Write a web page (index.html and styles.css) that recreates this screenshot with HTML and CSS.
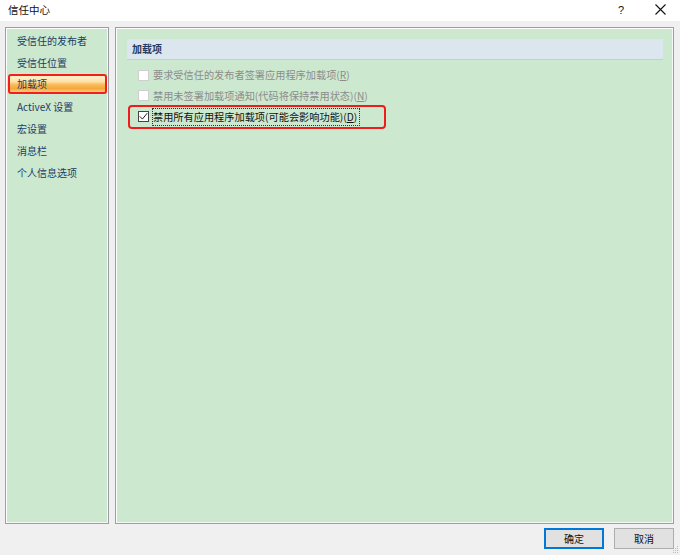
FILE: index.html
```html
<!DOCTYPE html>
<html lang="zh-CN">
<head>
<meta charset="utf-8">
<title>信任中心</title>
<link rel="stylesheet" href="styles.css">
</head>
<body>
<div class="dialog">
  <div class="titlebar">
    <span class="title">信任中心</span>
    <span class="tb-btns">
      <span class="help">?</span>
      <svg class="close" width="11" height="11" viewBox="0 0 11 11"><path d="M0.5 0.5 L10.5 10.5 M10.5 0.5 L0.5 10.5" stroke="#111" stroke-width="1.1" fill="none"/></svg>
    </span>
  </div>
  <div class="main">
    <ul class="nav">
      <li>受信任的发布者</li>
      <li>受信任位置</li>
      <li class="sel">加载项</li>
      <li>ActiveX 设置</li>
      <li>宏设置</li>
      <li>消息栏</li>
      <li>个人信息选项</li>
    </ul>
    <div class="content">
      <div class="section-head">加载项</div>
      <div class="opts">
        <div class="opt disabled"><span class="cb"></span><span class="lbl">要求受信任的发布者签署应用程序加载项(<u>R</u>)</span></div>
        <div class="opt disabled"><span class="cb"></span><span class="lbl">禁用未签署加载项通知(代码将保持禁用状态)(<u>N</u>)</span></div>
        <div class="opt marked"><span class="cb checked"><svg width="11" height="11" viewBox="0 0 11 11"><path d="M1.8 5.4 L4.4 8.1 L9.2 2.2" stroke="#222" stroke-width="1" fill="none"/></svg></span><span class="lbl focus">禁用所有应用程序加载项(可能会影响功能)(<u>D</u>)</span></div>
      </div>
    </div>
  </div>
  <div class="footer">
    <button class="btn primary">确定</button>
    <button class="btn">取消</button>
    <svg class="grip" width="6" height="8" viewBox="0 0 6 8"><rect x="4" y="0" width="1" height="1" fill="#bbb"/><rect x="2" y="2" width="1" height="1" fill="#bbb"/><rect x="4" y="2" width="1" height="1" fill="#bbb"/><rect x="0" y="4" width="1" height="1" fill="#bbb"/><rect x="2" y="4" width="1" height="1" fill="#bbb"/><rect x="4" y="4" width="1" height="1" fill="#bbb"/><rect x="0" y="6" width="1" height="1" fill="#bbb"/><rect x="2" y="6" width="1" height="1" fill="#bbb"/><rect x="4" y="6" width="1" height="1" fill="#bbb"/></svg>
  </div>
</div>
</body>
</html>
```
FILE: styles.css
```css
* { box-sizing: border-box; }
html, body {
  margin: 0;
  padding: 0;
  width: 680px;
  height: 555px;
  overflow: hidden;
  background: #f0f0f0;
  font-family: "Noto Sans CJK SC", "Noto Sans", sans-serif;
  font-size: 10px;
}
.dialog {
  display: flex;
  flex-direction: column;
  height: 555px;
}
.titlebar {
  height: 21px;
  background: #ffffff;
  display: flex;
  align-items: center;
  justify-content: space-between;
  padding: 0 14px 2px 8px;
}
.title {
  font-size: 10.5px;
  color: #111;
}
.tb-btns {
  display: flex;
  align-items: center;
  gap: 31px;
}
.help {
  font-family: "Liberation Sans", sans-serif;
  font-size: 11px;
  color: #111;
}
.close { display: block; }
.main {
  display: flex;
  gap: 6px;
  padding: 6px 6px 0 5px;
  height: 503px;
}
.nav, .content {
  background: #cce8cf;
  border: 1px solid #9d9da6;
  box-shadow: inset 1px 1px 0 #ffffff, inset -1px -1px 0 #f4f8f4;
  height: 497px;
}
.nav {
  width: 104px;
  list-style: none;
  margin: 0;
  padding: 1px 1px 0 2px;
}
.nav li {
  height: 22px;
  line-height: 20px;
  padding-left: 7px;
  color: #1f3b63;
  font-size: 10px;
  border: 2px solid transparent;
}
.nav li.sel {
  height: 20px;
  line-height: 16px;
  margin: 1px 0 1px 0;
  border-color: #f0201c;
  border-radius: 3px;
  background: linear-gradient(#fff1cd 0%, #fde2a6 35%, #f9ba5a 55%, #f7a737 80%, #fbd08a 100%);
}
.content {
  flex: 1;
  padding: 11px 10px 0 11px;
}
.section-head {
  height: 20px;
  background: #dce6ef;
  box-shadow: 0 1px 0 #c4d2c6;
  font-weight: bold;
  color: #1f3b63;
  font-size: 10px;
  line-height: 20px;
  padding-left: 5px;
}
.opts {
  padding: 6px 0 0 3px;
  display: flex;
  flex-direction: column;
}
.opt {
  display: flex;
  align-items: center;
  height: 20px;
  padding-left: 8px;
  gap: 4px;
  width: fit-content;
}
.opt + .opt { margin-top: 0.5px; }
.opt.disabled { color: #8c8c8c; }
.opt.marked {
  width: 254px;
  color: #111;
  outline: 2px solid #ee1c1c;
  border-radius: 2px;
  margin-top: 1px;
}
.cb {
  width: 11px;
  height: 11px;
  background: #fff;
  border: 1px solid #cfcfcf;
  display: flex;
  align-items: center;
  justify-content: center;
}
.cb.checked {
  border-color: #444;
}
.cb svg { display: block; margin: -1px; }
.lbl {
  line-height: 16px;
  white-space: nowrap;
  font-size: 10.2px;
}
.lbl u { text-decoration: underline; }
.focus {
  border: 1px dotted #333;
  padding: 0 2px 0 0;
  margin-left: -1px;
}
.footer {
  display: flex;
  justify-content: flex-end;
  gap: 10px;
  padding: 4px 6px 0 0;
  position: relative;
  flex: 1;
}
.btn {
  width: 60px;
  height: 21px;
  background: #e1e1e1;
  border: 1px solid #adadad;
  font-family: "Noto Sans CJK SC", sans-serif;
  font-size: 10px;
  color: #111;
  padding: 0;
  margin: 0;
}
.btn.primary {
  border: 2px solid #0078d7;
}
.grip {
  position: absolute;
  right: 1px;
  bottom: 1px;
}
```
